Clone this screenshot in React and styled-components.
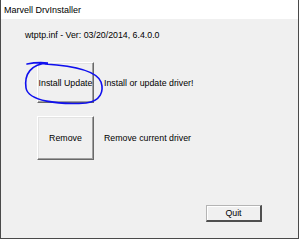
import React from "react"
import styled, { createGlobalStyle } from "styled-components"

const Global = createGlobalStyle`
  html, body {
    margin: 0;
    padding: 0;
    background: #ffffff;
  }
  body {
    font-family: "Liberation Sans", "Noto Sans", sans-serif;
  }
`

const Window = styled.div`
  position: relative;
  width: 299px;
  height: 239px;
  box-sizing: border-box;
  display: flex;
  flex-direction: column;
  border: 1px solid #4a4a4a;
  border-top: none;
  background: #f0f0f0;
`

const TitleBar = styled.div`
  height: 19px;
  flex: none;
  display: flex;
  align-items: center;
  padding-left: 3px;
  background: #ffffff;
  color: #000;
  font-size: 9px;
`

const Body = styled.div`
  flex: 1;
  display: flex;
  flex-direction: column;
  padding: 10px 36px 0 24px;
`

const Version = styled.div`
  font-size: 8.8px;
  line-height: 12px;
  color: #000;
`

const ActionRow = styled.div`
  display: flex;
  align-items: center;
  gap: 10px;
  margin-top: ${({ $top }) => $top}px;
  margin-left: 12px;
`

const Button = styled.button`
  box-sizing: border-box;
  width: ${({ $w }) => $w}px;
  height: ${({ $h }) => $h}px;
  padding: 0;
  font-family: inherit;
  font-size: 8.8px;
  white-space: nowrap;
  color: #000;
  background: #f0f0f0;
  border: 1px solid;
  border-color: #ffffff #696969 #696969 #ffffff;
  box-shadow: inset -1px -1px 0 #a0a0a0, inset 1px 1px 0 #e3e3e3;
  cursor: pointer;
  flex: none;
`

const DefaultButton = styled(Button)`
  border-color: #b4b4b4 #4f4f4f #4f4f4f #b4b4b4;
  border-width: 1px 2px 2px 1px;
  box-shadow: inset 1px 1px 0 #ffffff;
`

const Label = styled.span`
  font-size: 8.8px;
  color: #000;
`

const Footer = styled.div`
  display: flex;
  justify-content: flex-end;
  margin-top: 45px;
`

const Scribble = styled.svg`
  position: absolute;
  left: 0;
  top: 0;
  pointer-events: none;
`

export default function App() {
  return (
    <>
      <Global />
      <Window>
        <TitleBar>Marvell DrvInstaller</TitleBar>
        <Body>
          <Version>wtptp.inf - Ver: 03/20/2014, 6.4.0.0</Version>
          <ActionRow $top={21}>
            <Button $w={57} $h={41}>Install Update</Button>
            <Label>Install or update driver!</Label>
          </ActionRow>
          <ActionRow $top={13}>
            <Button $w={57} $h={44}>Remove</Button>
            <Label>Remove current driver</Label>
          </ActionRow>
          <Footer>
            <DefaultButton $w={56} $h={17}>Quit</DefaultButton>
          </Footer>
        </Body>
        <Scribble width="299" height="239" viewBox="0 0 299 239">
          <path
            d="M26 64 Q36 62 47 63 C30 64 23 74 25 88 C27 101 58 105 85 103 C100 101 103 91 100 82 C96 72 76 66 44 64"
            fill="none"
            stroke="#1010ee"
            strokeWidth="1.6"
            strokeLinecap="round"
          />
        </Scribble>
      </Window>
    </>
  )
}
